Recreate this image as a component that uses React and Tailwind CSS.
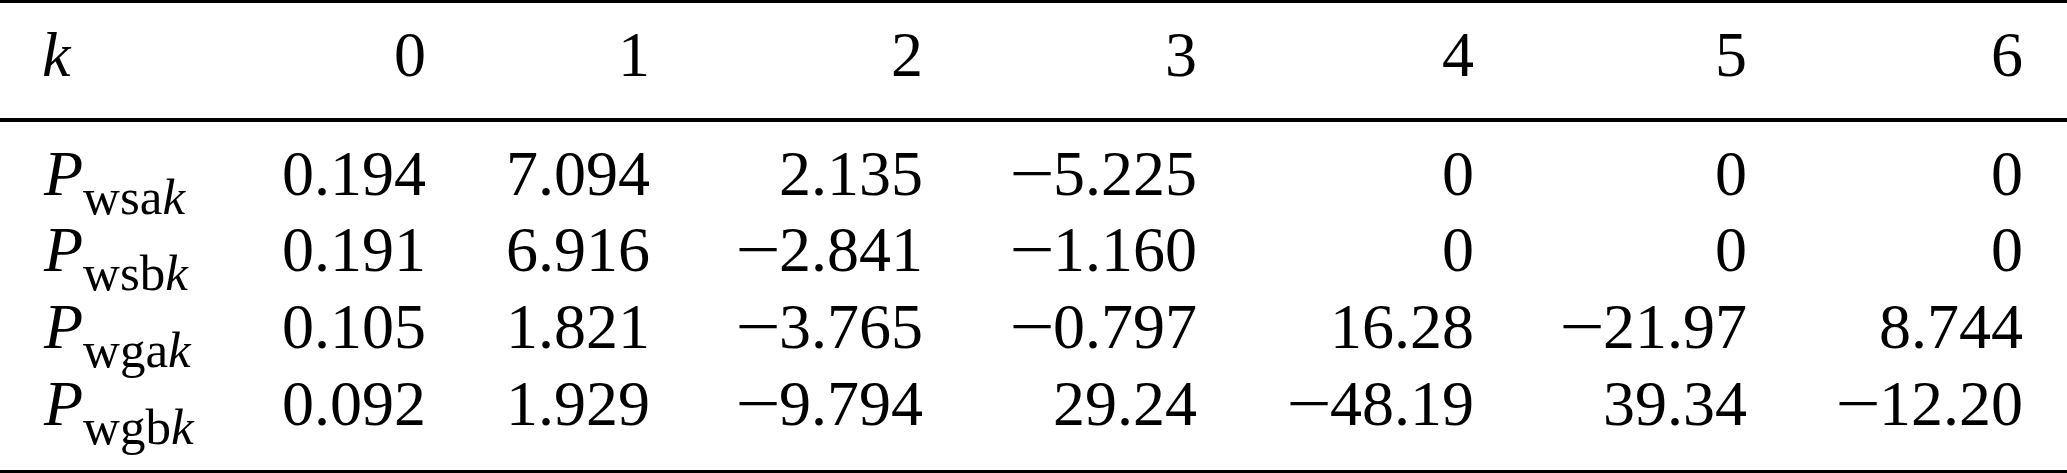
import React from "react";

const header = ["0", "1", "2", "3", "4", "5", "6"];

const rows = [
  { sub: "wsa", vals: ["0.194", "7.094", "2.135", "−5.225", "0", "0", "0"] },
  { sub: "wsb", vals: ["0.191", "6.916", "−2.841", "−1.160", "0", "0", "0"] },
  { sub: "wga", vals: ["0.105", "1.821", "−3.765", "−0.797", "16.28", "−21.97", "8.744"] },
  { sub: "wgb", vals: ["0.092", "1.929", "−9.794", "29.24", "−48.19", "39.34", "−12.20"] },
];

function Num({ v }) {
  if (v.startsWith("−")) {
    return (
      <span>
        <span className="inline-block scale-x-[1.25] mr-[3px]">−</span>
        {v.slice(1)}
      </span>
    );
  }
  return <span>{v}</span>;
}

const gridCols =
  "grid grid-cols-[250px_176px_224px_273px_274px_277px_273px_276px]";

export default function App() {
  return (
    <div
      className="w-[2067px] h-[473px] bg-white text-black overflow-hidden"
      style={{ fontFamily: '"Liberation Serif", "Times New Roman", serif' }}
    >
      <div className="h-[3px] bg-black" />
      <div className={`${gridCols} pt-[14px] pb-[24px] text-[64px] leading-[76.7px]`}>
        <div className="pl-[42px] italic">k</div>
        {header.map((h) => (
          <div key={h} className="text-right">
            {h}
          </div>
        ))}
      </div>
      <div className="h-[4px] bg-black" />
      <div className="pt-[14px] pb-[27px] text-[64px] leading-[76.7px]">
        {rows.map((r) => (
          <div key={r.sub} className={gridCols}>
            <div className="pl-[44px] whitespace-nowrap">
              <span className="italic">P</span>
              <span className="relative top-[19px] text-[51px] leading-none">
                {r.sub}
                <span className="italic">k</span>
              </span>
            </div>
            {r.vals.map((v, i) => (
              <div key={i} className="text-right whitespace-nowrap">
                <Num v={v} />
              </div>
            ))}
          </div>
        ))}
      </div>
      <div className="h-[3px] bg-black" />
    </div>
  );
}
